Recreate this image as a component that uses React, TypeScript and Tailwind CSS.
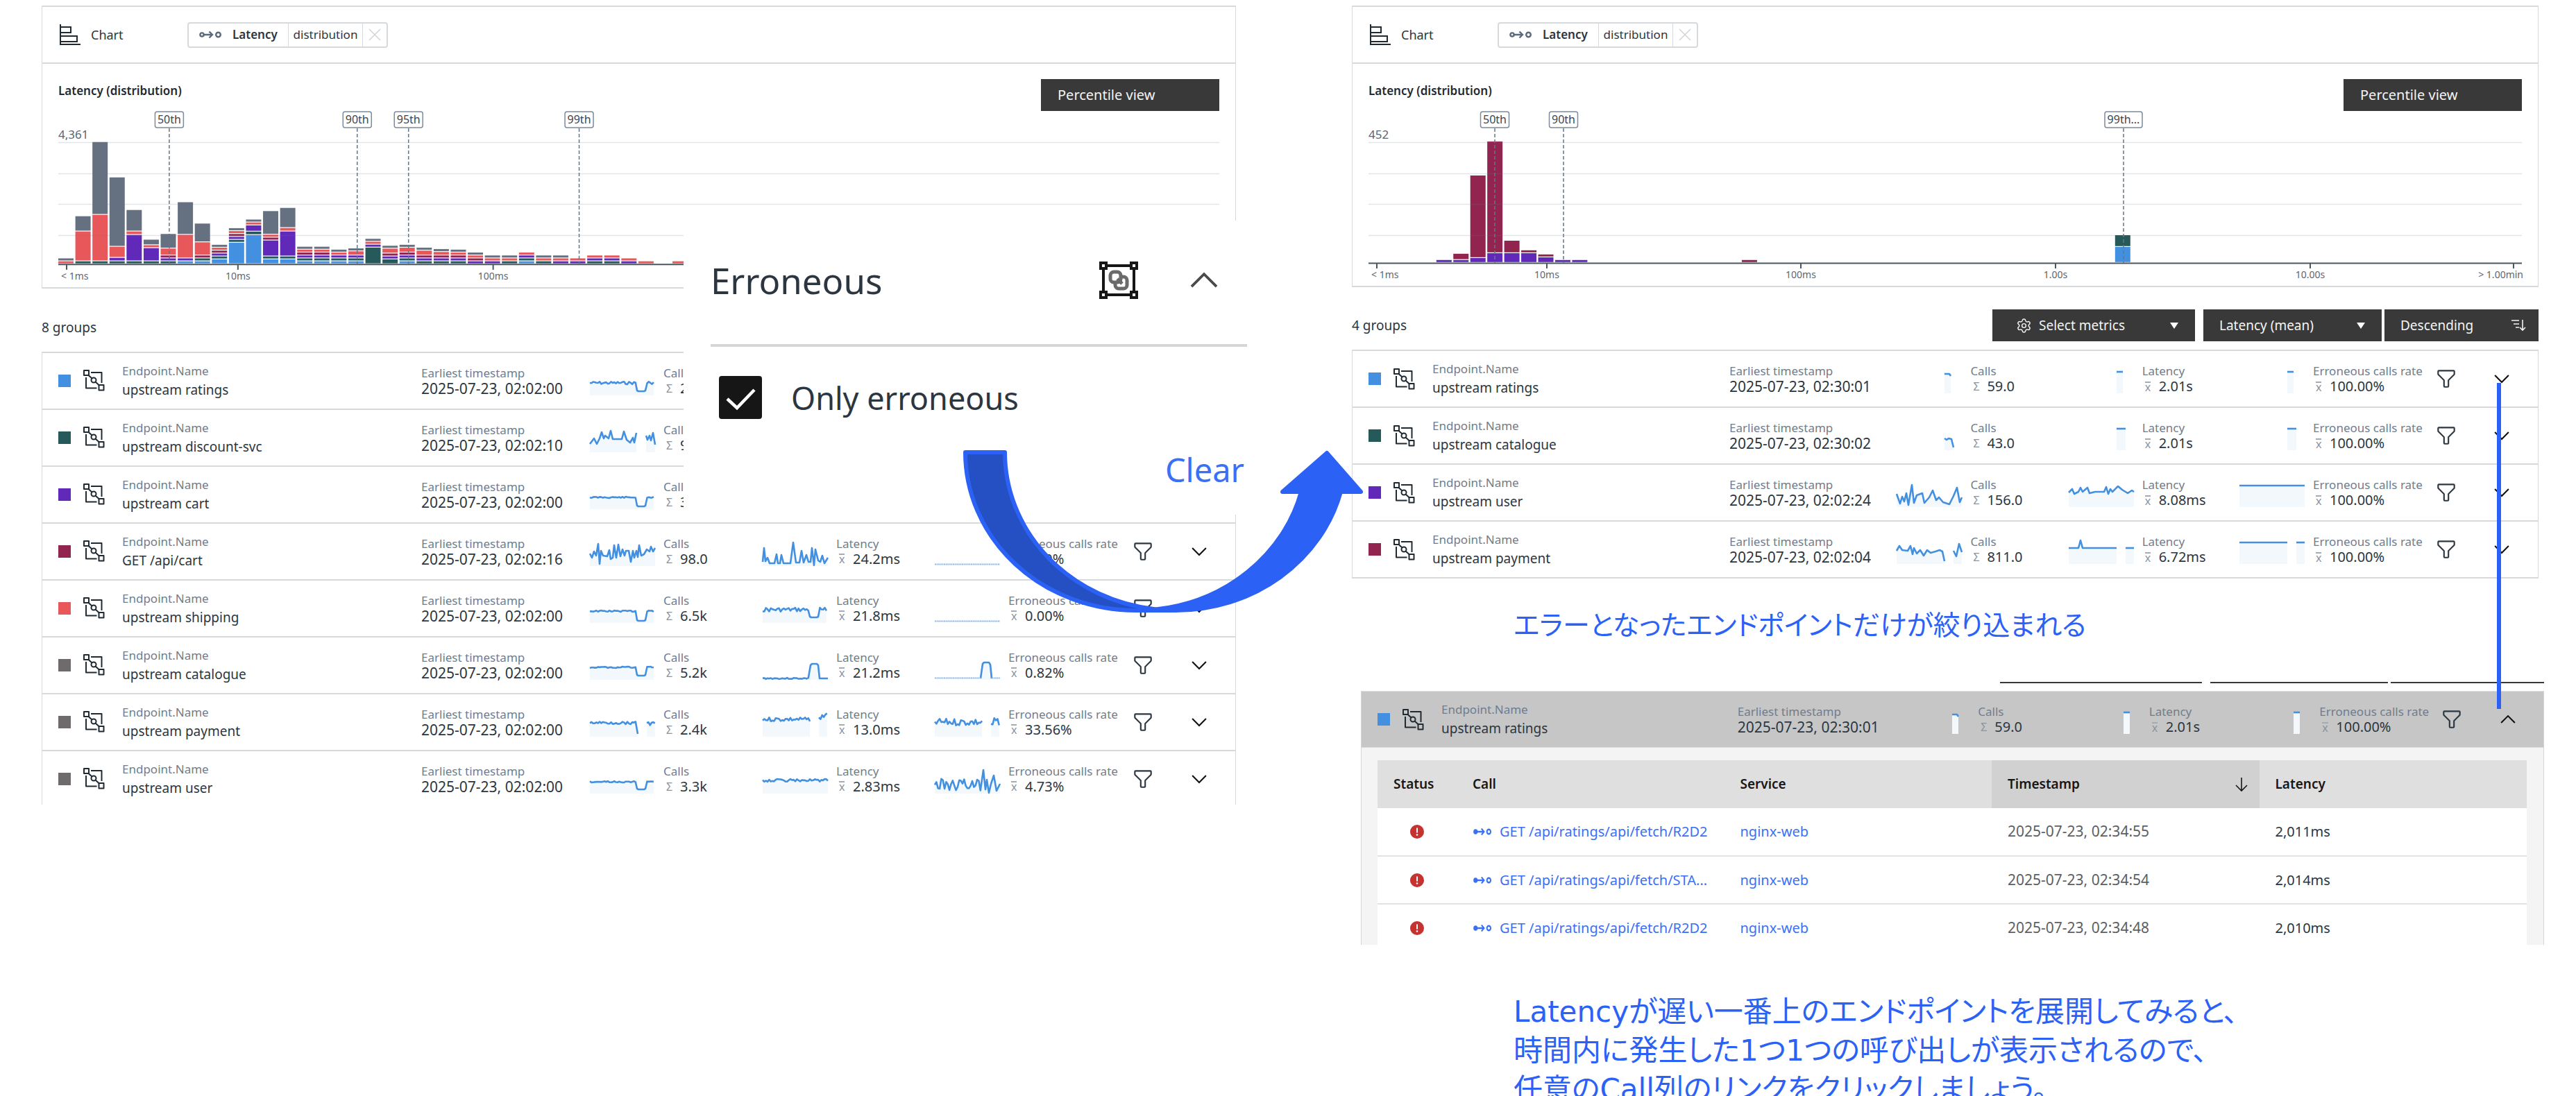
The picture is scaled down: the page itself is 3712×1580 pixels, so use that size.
import React from "react";
import { Settings } from "lucide-react";

const C = {
  g: "#657080",
  r: "#e8585b",
  t: "#26595a",
  p: "#6029ba",
  b: "#4390e0",
  m: "#91254f",
  k: "#6f6a6c",
} as const;
type Hue = keyof typeof C;
type Segment = [Hue, number];

/* ---------- icons ---------- */

function BarChartIcon() {
  return (
    <svg width="31" height="31" viewBox="0 0 31 31" fill="none" stroke="#1f2a33" strokeWidth="2" aria-hidden="true">
      <path d="M1 0v29h29" />
      <path d="M1 4h15v8H1M1 17h24v8H1" />
    </svg>
  );
}

function CallIcon({ color, solid }: { color: string; solid?: boolean }) {
  return (
    <svg width={solid ? 26 : 32} height="12" viewBox="0 0 32 12" preserveAspectRatio="none" fill="none" stroke={color} strokeWidth="2.4" aria-hidden="true" className="shrink-0">
      <circle cx="4" cy="6" r="2.6" fill={solid ? color : "none"} />
      <path d="M7 6h12M14.500 1.500l4.500 4.500-4.500 4.500" />
      <circle cx="27.500" cy="6" r="3.300" />
    </svg>
  );
}

function EndpointIcon() {
  return (
    <svg width="31" height="31" viewBox="0 0 31 31" fill="none" stroke="#1f2a33" strokeWidth="2" strokeLinejoin="round" aria-hidden="true">
      <path d="M1 1h7v7H1zM22.500 22h7v7.500h-7z" />
      <path d="M11 4h15.500v15M4 11v15.500h15.500" />
      <circle cx="15" cy="15" r="3.500" />
      <path d="M7.500 8l5 4.500M17.500 17.500l5.500 5" />
    </svg>
  );
}

function FilterIcon() {
  return (
    <svg width="34" height="34" viewBox="0 0 32 32" fill="#2b3640" aria-hidden="true">
      <path d="M18,28H14a2,2,0,0,1-2-2V18.410L4.590,11A2,2,0,0,1,4,9.590V6A2,2,0,0,1,6,4H26a2,2,0,0,1,2,2V9.590A2,2,0,0,1,27.410,11L20,18.410V26A2,2,0,0,1,18,28ZM6,6V9.590l8,8V26h4V17.590l8-8V6Z" />
    </svg>
  );
}

function Chevron({ up, size = 34, color = "#111" }: { up?: boolean; size?: number; color?: string }) {
  return (
    <svg width={size} height={size} viewBox="0 0 32 32" fill={color} aria-hidden="true">
      {up ? (
        <path d="M16 10 26 20 24.600 21.400 16 12.800 7.400 21.400 6 20z" />
      ) : (
        <path d="M16 22 6 12 7.400 10.600 16 19.200 24.600 10.600 26 12z" />
      )}
    </svg>
  );
}

function GroupObjectsIcon() {
  return (
    <svg width="56" height="54" viewBox="0 0 56 54" fill="none" stroke="#161616" strokeWidth="4" aria-hidden="true">
      <path d="M6 6h44v42H6z" />
      <rect x="2" y="2" width="8" height="8" fill="#fff" />
      <rect x="46" y="2" width="8" height="8" fill="#fff" />
      <rect x="2" y="44" width="8" height="8" fill="#fff" />
      <rect x="46" y="44" width="8" height="8" fill="#fff" />
      <g stroke="#6a6a6a" strokeWidth="5">
        <rect x="16" y="15" width="15" height="15" rx="5" />
        <path d="M33 22h2a5 5 0 0 1 5 5v7a5 5 0 0 1-5 5h-7a5 5 0 0 1-5-5v-2M26 25l7 7" />
      </g>
    </svg>
  );
}

/* ---------- spark lines ---------- */

type Line = number[][];

function noise(seed: number, base: number, amp: number, from = 0, to = 94): Line {
  const out: Line = [];
  let s = seed;
  for (let x = from; x <= to; x += 2.35) {
    s = (s * 9301 + 49297) % 233280;
    out.push([x, base + (s / 233280 - 0.5) * 2 * amp]);
  }
  return out;
}
const dip = (seed: number, base: number, low: number, amp = 1): Line[] => [
  [...noise(seed, base, amp, 0, 66), [68, low - 1], [70, low], [78, low], [80, low - 1], ...noise(seed + 3, base, amp, 82.5, 94)],
];

interface SparkData {
  lines?: Line[];
  dots?: number[][];
}

const flatZero: SparkData = { dots: [[0, 94]] };

function Spark({ lines = [], dots = [] }: SparkData) {
  return (
    <svg width="94" height="34" viewBox="0 0 94 34" className="mt-2 shrink-0 overflow-visible" fill="none" aria-hidden="true">
      {lines.map((l, i) => {
        const pts = l.map((p) => p.join(",")).join(" ");
        return (
          <g key={i}>
            <polygon points={`${l[0][0]},34 ${pts} ${l[l.length - 1][0]},34`} fill="#f3f8fd" />
            <polyline points={pts} stroke="#4390e0" strokeWidth="2.600" strokeLinejoin="round" />
          </g>
        );
      })}
      {dots.map(([a, b], i) => (
        <path key={i} d={`M${a} 31.500H${b}`} stroke="#8dbbe8" strokeWidth="2" strokeDasharray="2 .6" />
      ))}
    </svg>
  );
}

/* ---------- group rows ---------- */

interface Row {
  color: Hue;
  name: string;
  time: string;
  calls: string;
  latency?: string;
  errors?: string;
  s: SparkData[];
}

const spikes: Line[] = [
  [[0, 28], [2, 8], [4, 27], [7, 22], [10, 30], [17, 30], [20, 17], [22, 30], [25, 30], [27, 18], [30, 30], [40, 30], [44, 0], [48, 29], [53, 29], [56, 12], [59, 29], [63, 18], [66, 28], [69, 28], [71, 8], [74, 33], [76, 10], [80, 26], [83, 28], [86, 19], [89, 30], [94, 22]],
];

const cartCalls: Line[] = [
  [[0, 16], [3, 22], [6, 13], [9, 19], [12, 2], [14, 31], [16, 12], [19, 19], [25, 20], [28, 11], [30, 24], [33, 22], [35, 4], [38, 22], [41, 3], [44, 20], [47, 10], [50, 19], [52, 12], [56, 12], [59, 28], [62, 12], [64, 22], [67, 12], [69, 21], [71, 4], [74, 19], [78, 17], [82, 10], [86, 13], [88, 6], [91, 13], [94, 8]],
];

const allGroups: Row[] = [
  { color: "b", name: "upstream ratings", time: "02:02:00", calls: "2.6k", s: [{ lines: dip(7, 16, 28, 2) }] },
  {
    color: "t", name: "upstream discount-svc", time: "02:02:10", calls: "94.0",
    s: [{ lines: [[[0, 22], [6, 14], [10, 22], [14, 14], [17, 5], [20, 14], [22, 10], [27, 14], [30, 3], [33, 15], [46, 15], [49, 4], [53, 16], [58, 20], [62, 13], [64, 20], [67, 6]], [[81, 10], [83, 16], [86, 10], [88, 17], [91, 6], [94, 23]]] }],
  },
  { color: "p", name: "upstream cart", time: "02:02:00", calls: "3.4k", s: [{ lines: dip(11, 17, 30, 1) }] },
  { color: "m", name: "GET /api/cart", time: "02:02:16", calls: "98.0", latency: "24.2ms", errors: "0.00%", s: [{ lines: cartCalls }, { lines: spikes }, flatZero] },
  { color: "r", name: "upstream shipping", time: "02:02:00", calls: "6.5k", latency: "21.8ms", errors: "0.00%", s: [{ lines: dip(13, 17, 31, 1) }, { lines: dip(17, 15, 26, 3) }, flatZero] },
  {
    color: "k", name: "upstream catalogue", time: "02:02:00", calls: "5.2k", latency: "21.2ms", errors: "0.82%",
    s: [
      { lines: dip(19, 16, 28, 1) },
      { lines: [[...noise(3, 32, 1, 0, 66), [69, 13], [71, 11], [78, 11], [80, 13], [82, 32], [94, 32]]] },
      { lines: [[[66, 32], [69, 11], [71, 9], [78, 9], [80, 12], [82, 32]]], dots: [[0, 66], [82, 94]] },
    ],
  },
  { color: "k", name: "upstream payment", time: "02:02:00", calls: "2.4k", latency: "13.0ms", errors: "33.56%", s: [{ lines: [[...noise(9, 14, 2, 0, 66), [69, 30]], noise(8, 14, 4, 82, 94)] }, { lines: [noise(14, 9, 3, 0, 69), noise(31, 7, 7, 81, 94)] }, { lines: [noise(6, 13, 5, 0, 69), noise(12, 13, 7, 81, 94)] }] },
  { color: "k", name: "upstream user", time: "02:02:00", calls: "3.3k", latency: "2.83ms", errors: "4.73%", s: [{ lines: dip(23, 17, 28, 1) }, { lines: [noise(29, 15, 2)] }, { lines: [[...noise(33, 21, 9, 0, 68), [70, 0], [73, 28], [75, 14], [78, 33], [81, 20], [85, 8], [89, 30], [94, 20]]] }] },
];

const ratingsErrors: Row = {
  color: "b", name: "upstream ratings", time: "02:30:01", calls: "59.0", latency: "2.01s", errors: "100.00%",
  s: [{ lines: [[[69, 6], [76, 6], [78, 9]]] }, { lines: [[[69, 3], [78, 3]]] }, { lines: [[[69, 3], [78, 3]]] }],
};

const errorGroups: Row[] = [
  ratingsErrors,
  { color: "t", name: "upstream catalogue", time: "02:30:02", calls: "43.0", latency: "2.01s", errors: "100.00%", s: [{ lines: [[[69, 17], [72, 19], [75, 17], [79, 18], [82, 30]]] }, { lines: [[[69, 3], [82, 3]]] }, { lines: [[[69, 3], [82, 3]]] }] },
  { color: "p", name: "upstream user", time: "02:02:24", calls: "156.0", latency: "8.08ms", errors: "100.00%", s: [{ lines: [[[0, 15], [5, 29], [8, 19], [11, 26], [14, 14], [17, 31], [22, 2], [25, 28], [29, 17], [37, 14], [40, 28], [47, 20], [52, 10], [57, 24], [61, 20], [67, 27], [76, 30], [82, 18], [87, 6], [91, 27], [94, 20]]] }, { lines: [[[0, 13], [5, 8], [8, 15], [14, 12], [17, 6], [20, 12], [27, 6], [30, 14], [38, 12], [51, 12], [54, 5], [57, 15], [60, 8], [63, 12], [71, 4], [77, 9], [85, 14], [91, 10], [94, 12]]] }, { lines: [[[0, 3], [94, 3]]] }] },
  { color: "m", name: "upstream payment", time: "02:02:04", calls: "811.0", latency: "6.72ms", errors: "100.00%", s: [{ lines: [[[0, 15], [4, 8], [8, 14], [16, 15], [20, 8], [23, 20], [25, 11], [29, 19], [34, 14], [39, 22], [44, 14], [49, 18], [56, 16], [62, 14], [66, 16], [69, 30]], [[82, 15], [86, 23], [90, 5], [94, 17]]] }, { lines: [[[0, 11], [14, 11], [17, 0], [20, 11], [69, 11]], [[82, 11], [94, 11]]] }, { lines: [[[0, 3], [69, 3]], [[82, 3], [94, 3]]] }] },
];

function Metric({ label, value, sum, spark }: { label: string; value: string; sum?: boolean; spark: SparkData }) {
  return (
    <div className="flex items-center gap-3">
      <Spark {...spark} />
      <div className="flex flex-col leading-[22px] whitespace-nowrap">
        <span className="text-[17px] text-[#6f7d8e]">{label}</span>
        <span className="flex items-center gap-2 pl-1 text-[20px] text-[#2b3640]">
          {sum ? (
            <span className="w-3 text-[16px] text-[#8b949e]">Σ</span>
          ) : (
            <span className="flex w-3"><span className="border-t-2 border-[#a3abb3] text-[16px] leading-[13px] text-[#8b949e]">x</span></span>
          )}
          {value}
        </span>
      </div>
    </div>
  );
}

function GroupRow({ row, open }: { row: Row; open?: boolean }) {
  return (
    <div className="grid h-20 grid-cols-[36px_56px_minmax(0,431fr)_minmax(0,243fr)_minmax(0,249fr)_minmax(0,248fr)_minmax(0,283fr)_minmax(0,81fr)_minmax(0,69fr)] items-center pl-[23px]">
      <span className="size-[18px]" style={{ backgroundColor: C[row.color] }} />
      <EndpointIcon />
      <div className="flex flex-col whitespace-nowrap">
        <span className="text-[17px] leading-[26px] text-[#6f7d8e]">Endpoint.Name</span>
        <span className="text-[19px] leading-7 text-[#2b3640]">{row.name}</span>
      </div>
      <div className="flex flex-col leading-[22px] whitespace-nowrap">
        <span className="text-[17px] text-[#6f7d8e]">Earliest timestamp</span>
        <span className="text-[21px] text-[#2b3640]">2025-07-23, {row.time}</span>
      </div>
      <Metric label="Calls" value={row.calls} sum spark={row.s[0]} />
      {row.latency ? <Metric label="Latency" value={row.latency} spark={row.s[1]} /> : <span />}
      {row.errors ? <Metric label="Erroneous calls rate" value={row.errors} spark={row.s[2]} /> : <span />}
      <button type="button" aria-label={`Filter by ${row.name}`} className="w-fit"><FilterIcon /></button>
      <button type="button" aria-label={`Toggle ${row.name}`} aria-expanded={!!open} className="w-fit"><Chevron up={open} /></button>
    </div>
  );
}

function GroupList({ rows, cut }: { rows: Row[]; cut?: boolean }) {
  return (
    <ul className={cut ? "mt-3 h-[653px] overflow-hidden border-x border-t-2 border-[#d6dadd]" : "mt-3 border-x border-t-2 border-[#d6dadd]"}>
      {rows.map((r) => (
        <li key={r.name} className="border-b-2 border-[#d6dadd]">
          <GroupRow row={r} />
        </li>
      ))}
    </ul>
  );
}

/* ---------- distribution chart ---------- */

interface ChartData {
  width: number;
  height: number;
  max: string;
  pitch: number;
  bars: Record<number, Segment[]>;
  ticks: [number, string, "start" | "middle" | "end"][];
  marks: [number, string][];
}

const bars = (s: string): Segment[] => s.split(" ").map((v) => [v[0] as Hue, v.length > 1 ? Number(v.slice(1)) : 4.2]);

/* Segments are listed from the axis upwards. */
const allChart: ChartData = {
  width: 1674, height: 254, max: "4,361", pitch: 24.6,
  bars: {
    0: bars("r g"), 1: bars("t r43 g22"), 2: bars("t r67 g105"), 3: bars("t p5 r16 g100"), 4: bars("t p38 r5 g31"),
    5: bars("t p19 r g8"), 6: bars("t p m r10 g21"), 7: bars("b p r34 g47"), 8: bars("b t m r19 g27"), 9: bars("b7 t p m r g"),
    10: bars("b31 t p m r g"), 11: bars("b42 t5 p9 r g"), 12: bars("b7 t p23 m r g34"), 13: bars("b7 t p36 r5 g29"),
    14: bars("b t p m r g"), 15: bars("b t p m r g"), 16: bars("b t p r g"), 17: bars("b t p r6 g"), 18: bars("t24 p r g"),
    19: bars("t7 p m r7 g"), 20: bars("b t p m r7 g"), 21: bars("t p m r7 g"), 22: bars("t p m r5 g"), 23: bars("t p m r g"),
    24: bars("p m r g"), 25: bars("p r g"), 26: bars("t r g"), 27: bars("b t p r"), 28: bars("t r g"), 29: bars("p r g"),
    30: bars("p r"), 31: bars("t p r"), 32: bars("t p r"), 33: bars("p r"), 34: bars("r"), 36: bars("r"),
  },
  ticks: [[12, "< 1ms", "start"], [259, "10ms", "middle"], [627, "100ms", "middle"]],
  marks: [[160, "50th"], [431, "90th"], [505, "95th"], [751, "99th"]],
};

const errorChart: ChartData = {
  width: 1662, height: 252, max: "452", pitch: 24.45,
  bars: {
    4: bars("p"), 5: bars("p m9"), 6: bars("p7 m119"), 7: bars("p14 m161"), 8: bars("p14 m18"), 9: bars("p14 m"),
    10: bars("p8 m"), 11: bars("p"), 12: bars("p"), 22: bars("m"), 44: bars("b23 t17"),
  },
  ticks: [[12, "< 1ms", "start"], [257, "10ms", "middle"], [623, "100ms", "middle"], [990, "1.00s", "middle"], [1357, "10.00s", "middle"], [1650, "> 1.00min", "end"]],
  marks: [[182, "50th"], [281, "90th"], [1088, "99th..."]],
};

function Distribution({ data }: { data: ChartData }) {
  const base = data.height - 33;
  return (
    <svg viewBox={`0 0 ${data.width} ${data.height}`} className="block w-full overflow-visible" role="img" aria-label="Latency distribution">
      {Object.entries(data.bars).map(([i, segs]) => {
        let y = base;
        return segs.map(([hue, h], j) => {
          y -= h;
          return <rect key={`${i}-${j}`} x={Number(i) * data.pitch} y={y} width="22" height={h - 1.2} fill={C[hue]} />;
        });
      })}
      {[45, 90, 134, 179].map((y) => (
        <path key={y} d={`M0 ${y}.500H${data.width}`} stroke="#6b7a8d" strokeOpacity=".2" strokeWidth="1.500" />
      ))}
      <path d={`M0 ${base}.500H${data.width}`} stroke="#4b5661" strokeWidth="2" />
      <text x="0" y="40" fontSize="17" fill="#5d6670">{data.max}</text>
      {data.ticks.map(([x, t, anchor]) => (
        <g key={t}>
          <path d={`M${x} ${base}v8`} stroke="#4b5661" strokeWidth="2" />
          <text x={anchor === "start" ? 4 : anchor === "end" ? data.width + 2 : x} y={base + 22} fontSize="14" fill="#5d6670" textAnchor={anchor}>{t}</text>
        </g>
      ))}
      {data.marks.map(([x, t]) => {
        const w = t.length > 4 ? 54 : 41;
        return (
          <g key={t}>
            <path d={`M${x} 25V${base}`} stroke="#65758a" strokeWidth="1.500" strokeDasharray="5 3" />
            <rect x={x - w / 2} y="1" width={w} height="23" rx="3" fill="#fff" stroke="#7d8b9b" strokeWidth="1.500" />
            <text x={x} y="18" fontSize="16" fill="#3d4650" textAnchor="middle">{t}</text>
          </g>
        );
      })}
    </svg>
  );
}

function ChartCard({ data }: { data: ChartData }) {
  return (
    <section className="border-x border-y-2 border-[#d6dadd]">
      <header className="flex h-[82px] items-center border-b-2 border-[#d6dadd] pl-[25px] text-[#2b3640]">
        <BarChartIcon />
        <span className="ml-3.5 w-[139px] text-[18px]">Chart</span>
        <div className="flex h-[37px] items-stretch rounded border-2 border-[#d6dadd]">
          <span className="flex w-[143px] items-center gap-4 pl-[15px] text-[17px] font-semibold"><CallIcon color="#5b6b7c" />Latency</span>
          <span className="flex w-[107px] items-center justify-center border-l border-[#d6dadd] text-[17px]">distribution</span>
          <button type="button" aria-label="Remove metric" className="flex w-[35px] items-center justify-center border-l border-[#d6dadd]">
            <svg width="18" height="18" viewBox="0 0 18 18" stroke="#d0d4d8" strokeWidth="1.500" aria-hidden="true"><path d="M1 1l16 16M17 1L1 17" /></svg>
          </button>
        </div>
      </header>
      <div className="px-[23px] pt-[22px]">
        <div className="flex items-start justify-between">
          <h2 className="text-[17px] leading-[34px] font-semibold text-[#1f2a33]">Latency (distribution)</h2>
          <button type="button" className="h-[46px] w-[257px] bg-[#393939] pl-6 text-left text-[20px] text-[#f4f4f4]">Percentile view</button>
        </div>
        <Distribution data={data} />
      </div>
    </section>
  );
}

/* ---------- toolbar ---------- */

const Caret = () => (
  <svg width="12" height="9" viewBox="0 0 12 9" fill="#fff" aria-hidden="true"><path d="M0 0h12L6 9z" /></svg>
);

function Toolbar() {
  return (
    <div className="flex text-[19px] text-[#f4f4f4]">
      <button type="button" className="flex h-[46px] w-[292px] items-center bg-[#393939] pr-6 pl-[34px]">
        <Settings size={23} strokeWidth={1.5} />
        <span className="ml-2.5 flex-1 text-left">Select metrics</span>
        <Caret />
      </button>
      <div className="relative ml-3 flex items-center">
        <select aria-label="Sort metric" defaultValue="mean" className="h-[46px] w-[257px] appearance-none bg-[#393939] pl-[23px]">
          <option value="mean">Latency (mean)</option>
        </select>
        <span className="pointer-events-none absolute right-6"><Caret /></span>
      </div>
      <button type="button" className="ml-1 flex h-[46px] w-[222px] items-center justify-between bg-[#393939] pr-[18px] pl-[23px]">
        Descending
        <svg width="22" height="18" viewBox="0 0 22 18" fill="none" stroke="#f4f4f4" strokeWidth="1.600" aria-hidden="true">
          <path d="M1 2h11M4 7h8M7 12h5M17 1v15M13 12l4 4 4-4" />
        </svg>
      </button>
    </div>
  );
}

/* ---------- filter card ---------- */

function ErroneousFilter() {
  return (
    <div className="absolute -right-10 left-[925px] top-[318px] h-[424px] bg-white pt-[52px] pr-6 pl-[39px] text-[#2b3640]">
      <div className="flex h-[68px] items-center">
        <h3 className="flex-1 text-[51px] leading-none">Erroneous</h3>
        <GroupObjectsIcon />
        <button type="button" aria-label="Collapse" className="mr-[31px] ml-[64px]"><Chevron up size={62} color="#4a4a4a" /></button>
      </div>
      <div className="mt-[58px] h-1 bg-[#d6d6d6]" />
      <label className="mt-[42px] flex items-center gap-[42px] pl-3">
        <span className="relative flex size-[62px]">
          <input type="checkbox" defaultChecked className="size-[62px] appearance-none rounded bg-[#161616]" />
          <svg viewBox="0 0 62 62" className="pointer-events-none absolute size-[62px]" fill="none" stroke="#fff" strokeWidth="4.500" aria-hidden="true"><path d="M12 33l14 13 25-26" /></svg>
        </span>
        <span className="text-[45px] leading-none">Only erroneous</span>
      </label>
      <button type="button" className="mt-[50px] block w-full pr-1 text-right text-[47px] leading-none text-[#3a70f5]">Clear</button>
    </div>
  );
}

/* ---------- expanded group ---------- */

const calls = [
  { path: "GET /api/ratings/api/fetch/R2D2", time: "02:34:55", latency: "2,011ms" },
  { path: "GET /api/ratings/api/fetch/STA...", time: "02:34:54", latency: "2,014ms" },
  { path: "GET /api/ratings/api/fetch/R2D2", time: "02:34:48", latency: "2,010ms" },
];

function ExpandedGroup() {
  return (
    <section className="ml-[13px]">
      <div className="ml-[921px] flex h-0.5">
        <span className="flex-[292] bg-[#393939]" />
        <span className="ml-3 flex-[256] bg-[#393939]" />
        <span className="ml-1 flex-[222] bg-[#393939]" />
      </div>
      <div className="mt-[11px] h-[366px] overflow-hidden border-x border-[#d5d5d5] bg-[#f4f4f4]">
        <div className="border-y border-[#d9dcdf] bg-[#c6c6c6]">
          <GroupRow row={ratingsErrors} open />
        </div>
        <table className="mt-[18px] mr-6 ml-[23px] w-[calc(100%-47px)] table-fixed border-collapse bg-white text-left text-[20px]">
          <thead className="bg-[#e0dfe0] text-[19px] text-[#161616]">
            <tr className="h-[69px]">
              <th className="w-[114px] pl-[23px] font-semibold">Status</th>
              <th className="pl-[23px] font-semibold">Call</th>
              <th className="pl-[23px] font-semibold">Service</th>
              <th className="bg-[#d1d1d1] pl-[23px] font-semibold" aria-sort="descending">
                <span className="flex items-center justify-between pr-4">
                  Timestamp
                  <svg width="20" height="22" viewBox="0 0 20 22" fill="none" stroke="#161616" strokeWidth="1.600" aria-hidden="true"><path d="M10 1v19M2 12l8 8 8-8" /></svg>
                </span>
              </th>
              <th className="pl-[23px] font-semibold">Latency</th>
            </tr>
          </thead>
          <tbody>
            {calls.map((c) => (
              <tr key={c.time} className="h-[69px] border-b-2 border-[#e2e2e2]">
                <td className="pl-[47px]">
                  <svg width="20" height="20" viewBox="0 0 20 20" role="img" aria-label="Error">
                    <circle cx="10" cy="10" r="10" fill="#c5322f" />
                    <path d="M10 4.500v7" stroke="#fff" strokeWidth="2" />
                    <circle cx="10" cy="14.500" r="1.300" fill="#fff" />
                  </svg>
                </td>
                <td className="pl-6">
                  <a href="#call" className="flex items-center gap-3 whitespace-nowrap text-[#3a70f5]"><CallIcon color="#3a70f5" solid />{c.path}</a>
                </td>
                <td className="pl-[23px]"><a href="#service" className="text-[#3a70f5]">nginx-web</a></td>
                <td className="pl-[23px] text-[21px] text-[#5c6065]">2025-07-23, {c.time}</td>
                <td className="pl-[23px] text-[#2b3640]">{c.latency}</td>
              </tr>
            ))}
          </tbody>
        </table>
      </div>
    </section>
  );
}

function FlowArrow() {
  return (
    <svg width="576" height="234" viewBox="1388 649 576 234" className="pointer-events-none absolute top-[649px] left-[1388px]" stroke="#2c61f6" strokeWidth="6" strokeLinejoin="round" aria-hidden="true">
      <path fill="#2550c4" d="M1391 652H1448A246 228 0 0 0 1665.500 878.500L1637 880A246 228 0 0 1 1391 652z" />
      <path fill="#2c61f6" d="M1665.500 878.500A246 228 0 0 0 1875 709H1848L1912 653L1961 709H1932A246 228 0 0 1 1694 880H1637z" />
    </svg>
  );
}

export default function App() {
  return (
    <div className="relative h-screen overflow-hidden bg-white font-['Noto_Sans','Noto_Sans_CJK_JP',sans-serif]">
      <main className="grid grid-cols-[minmax(0,1721fr)_minmax(0,1718fr)] items-start gap-x-[167px] pr-[46px] pl-[60px]">
        <div className="relative pt-2">
          <ChartCard data={allChart} />
          <div className="mt-[33px] flex h-[46px] items-center text-[19px] text-[#2b3640]">8 groups</div>
          <GroupList rows={allGroups} cut />
          <ErroneousFilter />
        </div>

        <div className="relative pt-2">
          <div className="mr-2">
            <ChartCard data={errorChart} />
            <div className="mt-8 flex items-center justify-between text-[19px] text-[#2b3640]">
              4 groups
              <Toolbar />
            </div>
            <GroupList rows={errorGroups} />
          </div>
          <p className="mt-10 pl-[233px] font-['DejaVu_Sans','Noto_Sans_CJK_JP',sans-serif] text-[39px] leading-[56px] whitespace-nowrap text-[#2c61f6] [font-feature-settings:'palt']">
            エラーとなったエンドポイントだけが絞り込まれる
          </p>
          <div className="mt-[53px]">
            <ExpandedGroup />
          </div>
          <p className="mt-[69px] pl-[233px] font-['DejaVu_Sans','Noto_Sans_CJK_JP',sans-serif] text-[42px] leading-[56px] whitespace-nowrap text-[#2c61f6] [font-feature-settings:'palt']">
            Latencyが遅い一番上のエンドポイントを展開してみると、
            <br />
            時間内に発生した1つ1つの呼び出しが表示されるので、
            <br />
            任意のCall列のリンクをクリックしましょう。
          </p>
          <div className="absolute top-[552px] right-[62px] h-[470px] w-1.5 bg-[#2c61f6]" />
        </div>
      </main>
      <FlowArrow />
    </div>
  );
}
